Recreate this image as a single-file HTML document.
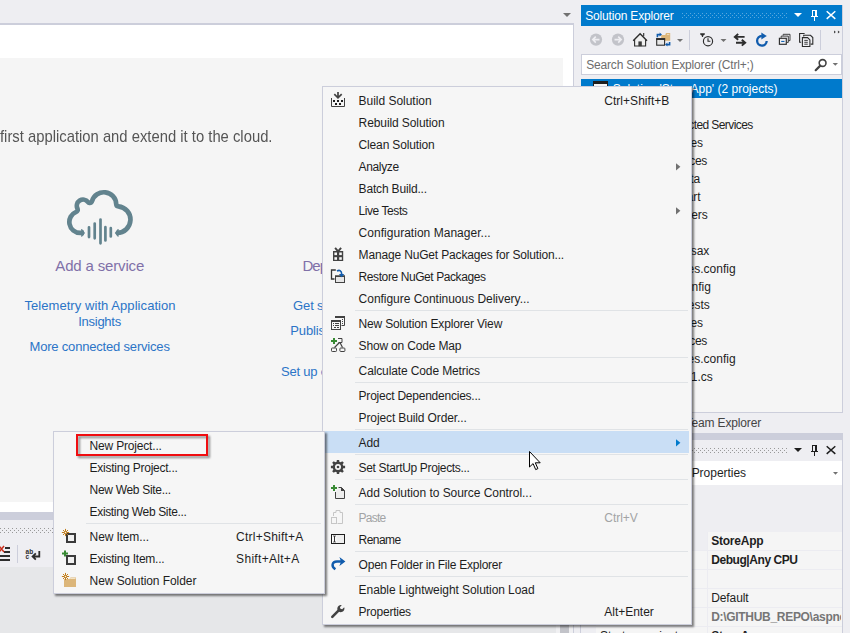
<!DOCTYPE html>
<html><head><meta charset="utf-8"><title>Solution Explorer - Add New Project</title>
<style>
html,body{margin:0;padding:0}
body{width:850px;height:633px;overflow:hidden;background:#eeeef2;position:relative;font-family:"Liberation Sans",sans-serif;}
.a{position:absolute}
.t{position:absolute;white-space:pre;}
.ic{position:absolute;overflow:visible}
#menu{position:absolute;left:322px;top:86px;width:368px;height:537px;background:#f6f6f6;border:1px solid #cccedb;box-shadow:2px 2px 2px rgba(0,0,0,.5);}
#sub{position:absolute;left:53px;top:431px;width:270px;height:161px;background:#f6f6f6;border:1px solid #cccedb;box-shadow:2px 2px 2px rgba(0,0,0,.5);}
.sep{position:absolute;height:1px;background:#e0e3e6}
</style></head><body>
<div id="page" class="a" style="left:0;top:0;width:850px;height:633px;overflow:hidden">
<!-- document well -->
<div class="a" style="left:0;top:23px;width:574px;height:2px;background:#cccedb"></div>
<div class="a" style="left:0;top:25px;width:573px;height:487px;background:#fff"></div>
<div class="a" style="left:573px;top:23px;width:1px;height:497px;background:#cccedb"></div>
<div class="a" style="left:0;top:58px;width:563px;height:444px;background:#f5f5f5"></div>
<div class="a" style="left:0;top:512px;width:574px;height:8px;background:#cccedb"></div>
<div class="a" style="left:0;top:567px;width:581px;height:66px;background:#e6e7e9"></div>
<div class="a" style="left:556px;top:567px;width:17px;height:66px;background:#f0f0f2"></div>
<div class="a" style="left:560px;top:567px;width:9px;height:66px;background:#c2c3c9"></div>
<div class="a" style="left:573px;top:567px;width:1px;height:66px;background:#cccedb"></div>
<div class="a" style="left:574px;top:567px;width:6px;height:66px;background:#eeeef2"></div>
<div class="a" style="left:580px;top:440px;width:1px;height:193px;background:#cccedb"></div>
<!-- solution explorer -->
<div class="a" style="left:581px;top:5px;width:261px;height:407px;background:#f5f5f5;border-right:1px solid #cccedb;border-bottom:1px solid #cccedb"></div>
<div class="a" style="left:581px;top:5px;width:261px;height:21px;background:#007acc"></div>
<div class="a" style="left:581px;top:26px;width:261px;height:53px;background:#eeeef2"></div>
<div class="a" style="left:581px;top:54px;width:259px;height:19px;background:#fff;border:1px solid #cccedb"></div>
<div class="a" style="left:581px;top:79px;width:261px;height:19px;background:#007acc"></div>
<div class="a" style="left:689px;top:30px;width:1px;height:20px;background:#cccedb"></div>
<div class="a" style="left:820px;top:30px;width:1px;height:20px;background:#cccedb"></div>
<!-- properties -->
<div class="a" style="left:581px;top:433px;width:262px;height:7px;background:#cccedb"></div>
<div class="a" style="left:581px;top:440px;width:261px;height:193px;background:#eeeef2;border-right:1px solid #cccedb"></div>
<div class="a" style="left:581px;top:461px;width:261px;height:24px;background:#fff"></div>
<div class="a" style="left:596px;top:532px;width:246px;height:101px;background:#f5f5f5"></div>
<div class="a" style="left:596px;top:532px;width:112px;height:18px;background:#eeeef2"></div>
<div class="a" style="left:596px;top:550px;width:246px;height:1px;background:#ececf1"></div>
<div class="a" style="left:596px;top:569px;width:246px;height:1px;background:#ececf1"></div>
<div class="a" style="left:596px;top:588px;width:246px;height:1px;background:#ececf1"></div>
<div class="a" style="left:596px;top:607px;width:246px;height:1px;background:#ececf1"></div>
<div class="a" style="left:596px;top:626px;width:246px;height:1px;background:#ececf1"></div>
<div class="a" style="left:707px;top:532px;width:1px;height:101px;background:#ececf1"></div>
<svg class="ic" style="left:60px;top:185px" width="80" height="65" viewBox="60 185 80 65" ><clipPath id="cloudclip"><path d="M84 235.30H80.3A13.30 13.30 0 0 1 75.36 209.65A8.60 8.60 0 0 1 89.79 200.49A14.70 14.70 0 0 1 118.59 203.97A15.70 15.70 0 0 1 117.10 235.30H116.5z"/></clipPath><path d="M84 235.30H80.3A13.30 13.30 0 0 1 75.36 209.65A8.60 8.60 0 0 1 89.79 200.49A14.70 14.70 0 0 1 118.59 203.97A15.70 15.70 0 0 1 117.10 235.30H116.5" fill="none" stroke="#62838e" stroke-width="9.4" stroke-linejoin="round" clip-path="url(#cloudclip)"/><path d="M81.2 229l0.8 0l3 3.9l-3 3.9l-0.8 0zM118.6 229l-0.8 0l-3 3.9l3 3.9l0.8 0z" fill="#62838e"/><g stroke="#62838e" stroke-width="2.7" stroke-linecap="round" fill="none"><path d="M89 227.3v9.8M94.7 223.5v14.8M100.5 219.5v23.8M105.4 227.2v13.2M110.8 228.2v8.2"/></g></svg>
<svg class="ic" style="left:682px;top:13px" width="106" height="5" viewBox="682 13 106 5" ><g fill="#59a8de" shape-rendering="crispEdges"><rect x="682" y="13" width="1" height="1"/><rect x="682" y="17" width="1" height="1"/><rect x="684" y="15" width="1" height="1"/><rect x="686" y="13" width="1" height="1"/><rect x="686" y="17" width="1" height="1"/><rect x="688" y="15" width="1" height="1"/><rect x="690" y="13" width="1" height="1"/><rect x="690" y="17" width="1" height="1"/><rect x="692" y="15" width="1" height="1"/><rect x="694" y="13" width="1" height="1"/><rect x="694" y="17" width="1" height="1"/><rect x="696" y="15" width="1" height="1"/><rect x="698" y="13" width="1" height="1"/><rect x="698" y="17" width="1" height="1"/><rect x="700" y="15" width="1" height="1"/><rect x="702" y="13" width="1" height="1"/><rect x="702" y="17" width="1" height="1"/><rect x="704" y="15" width="1" height="1"/><rect x="706" y="13" width="1" height="1"/><rect x="706" y="17" width="1" height="1"/><rect x="708" y="15" width="1" height="1"/><rect x="710" y="13" width="1" height="1"/><rect x="710" y="17" width="1" height="1"/><rect x="712" y="15" width="1" height="1"/><rect x="714" y="13" width="1" height="1"/><rect x="714" y="17" width="1" height="1"/><rect x="716" y="15" width="1" height="1"/><rect x="718" y="13" width="1" height="1"/><rect x="718" y="17" width="1" height="1"/><rect x="720" y="15" width="1" height="1"/><rect x="722" y="13" width="1" height="1"/><rect x="722" y="17" width="1" height="1"/><rect x="724" y="15" width="1" height="1"/><rect x="726" y="13" width="1" height="1"/><rect x="726" y="17" width="1" height="1"/><rect x="728" y="15" width="1" height="1"/><rect x="730" y="13" width="1" height="1"/><rect x="730" y="17" width="1" height="1"/><rect x="732" y="15" width="1" height="1"/><rect x="734" y="13" width="1" height="1"/><rect x="734" y="17" width="1" height="1"/><rect x="736" y="15" width="1" height="1"/><rect x="738" y="13" width="1" height="1"/><rect x="738" y="17" width="1" height="1"/><rect x="740" y="15" width="1" height="1"/><rect x="742" y="13" width="1" height="1"/><rect x="742" y="17" width="1" height="1"/><rect x="744" y="15" width="1" height="1"/><rect x="746" y="13" width="1" height="1"/><rect x="746" y="17" width="1" height="1"/><rect x="748" y="15" width="1" height="1"/><rect x="750" y="13" width="1" height="1"/><rect x="750" y="17" width="1" height="1"/><rect x="752" y="15" width="1" height="1"/><rect x="754" y="13" width="1" height="1"/><rect x="754" y="17" width="1" height="1"/><rect x="756" y="15" width="1" height="1"/><rect x="758" y="13" width="1" height="1"/><rect x="758" y="17" width="1" height="1"/><rect x="760" y="15" width="1" height="1"/><rect x="762" y="13" width="1" height="1"/><rect x="762" y="17" width="1" height="1"/><rect x="764" y="15" width="1" height="1"/><rect x="766" y="13" width="1" height="1"/><rect x="766" y="17" width="1" height="1"/><rect x="768" y="15" width="1" height="1"/><rect x="770" y="13" width="1" height="1"/><rect x="770" y="17" width="1" height="1"/><rect x="772" y="15" width="1" height="1"/><rect x="774" y="13" width="1" height="1"/><rect x="774" y="17" width="1" height="1"/><rect x="776" y="15" width="1" height="1"/><rect x="778" y="13" width="1" height="1"/><rect x="778" y="17" width="1" height="1"/><rect x="780" y="15" width="1" height="1"/><rect x="782" y="13" width="1" height="1"/><rect x="782" y="17" width="1" height="1"/><rect x="784" y="15" width="1" height="1"/><rect x="786" y="13" width="1" height="1"/><rect x="786" y="17" width="1" height="1"/></g></svg>
<svg class="ic" style="left:682px;top:448px" width="106" height="5" viewBox="682 448 106 5" ><g fill="#999999" shape-rendering="crispEdges"><rect x="682" y="448" width="1" height="1"/><rect x="682" y="452" width="1" height="1"/><rect x="684" y="450" width="1" height="1"/><rect x="686" y="448" width="1" height="1"/><rect x="686" y="452" width="1" height="1"/><rect x="688" y="450" width="1" height="1"/><rect x="690" y="448" width="1" height="1"/><rect x="690" y="452" width="1" height="1"/><rect x="692" y="450" width="1" height="1"/><rect x="694" y="448" width="1" height="1"/><rect x="694" y="452" width="1" height="1"/><rect x="696" y="450" width="1" height="1"/><rect x="698" y="448" width="1" height="1"/><rect x="698" y="452" width="1" height="1"/><rect x="700" y="450" width="1" height="1"/><rect x="702" y="448" width="1" height="1"/><rect x="702" y="452" width="1" height="1"/><rect x="704" y="450" width="1" height="1"/><rect x="706" y="448" width="1" height="1"/><rect x="706" y="452" width="1" height="1"/><rect x="708" y="450" width="1" height="1"/><rect x="710" y="448" width="1" height="1"/><rect x="710" y="452" width="1" height="1"/><rect x="712" y="450" width="1" height="1"/><rect x="714" y="448" width="1" height="1"/><rect x="714" y="452" width="1" height="1"/><rect x="716" y="450" width="1" height="1"/><rect x="718" y="448" width="1" height="1"/><rect x="718" y="452" width="1" height="1"/><rect x="720" y="450" width="1" height="1"/><rect x="722" y="448" width="1" height="1"/><rect x="722" y="452" width="1" height="1"/><rect x="724" y="450" width="1" height="1"/><rect x="726" y="448" width="1" height="1"/><rect x="726" y="452" width="1" height="1"/><rect x="728" y="450" width="1" height="1"/><rect x="730" y="448" width="1" height="1"/><rect x="730" y="452" width="1" height="1"/><rect x="732" y="450" width="1" height="1"/><rect x="734" y="448" width="1" height="1"/><rect x="734" y="452" width="1" height="1"/><rect x="736" y="450" width="1" height="1"/><rect x="738" y="448" width="1" height="1"/><rect x="738" y="452" width="1" height="1"/><rect x="740" y="450" width="1" height="1"/><rect x="742" y="448" width="1" height="1"/><rect x="742" y="452" width="1" height="1"/><rect x="744" y="450" width="1" height="1"/><rect x="746" y="448" width="1" height="1"/><rect x="746" y="452" width="1" height="1"/><rect x="748" y="450" width="1" height="1"/><rect x="750" y="448" width="1" height="1"/><rect x="750" y="452" width="1" height="1"/><rect x="752" y="450" width="1" height="1"/><rect x="754" y="448" width="1" height="1"/><rect x="754" y="452" width="1" height="1"/><rect x="756" y="450" width="1" height="1"/><rect x="758" y="448" width="1" height="1"/><rect x="758" y="452" width="1" height="1"/><rect x="760" y="450" width="1" height="1"/><rect x="762" y="448" width="1" height="1"/><rect x="762" y="452" width="1" height="1"/><rect x="764" y="450" width="1" height="1"/><rect x="766" y="448" width="1" height="1"/><rect x="766" y="452" width="1" height="1"/><rect x="768" y="450" width="1" height="1"/><rect x="770" y="448" width="1" height="1"/><rect x="770" y="452" width="1" height="1"/><rect x="772" y="450" width="1" height="1"/><rect x="774" y="448" width="1" height="1"/><rect x="774" y="452" width="1" height="1"/><rect x="776" y="450" width="1" height="1"/><rect x="778" y="448" width="1" height="1"/><rect x="778" y="452" width="1" height="1"/><rect x="780" y="450" width="1" height="1"/><rect x="782" y="448" width="1" height="1"/><rect x="782" y="452" width="1" height="1"/><rect x="784" y="450" width="1" height="1"/><rect x="786" y="448" width="1" height="1"/><rect x="786" y="452" width="1" height="1"/></g></svg>
<svg class="ic" style="left:0px;top:528px" width="53" height="5" viewBox="0 528 53 5" ><g fill="#999999" shape-rendering="crispEdges"><rect x="0" y="528" width="1" height="1"/><rect x="0" y="532" width="1" height="1"/><rect x="2" y="530" width="1" height="1"/><rect x="4" y="528" width="1" height="1"/><rect x="4" y="532" width="1" height="1"/><rect x="6" y="530" width="1" height="1"/><rect x="8" y="528" width="1" height="1"/><rect x="8" y="532" width="1" height="1"/><rect x="10" y="530" width="1" height="1"/><rect x="12" y="528" width="1" height="1"/><rect x="12" y="532" width="1" height="1"/><rect x="14" y="530" width="1" height="1"/><rect x="16" y="528" width="1" height="1"/><rect x="16" y="532" width="1" height="1"/><rect x="18" y="530" width="1" height="1"/><rect x="20" y="528" width="1" height="1"/><rect x="20" y="532" width="1" height="1"/><rect x="22" y="530" width="1" height="1"/><rect x="24" y="528" width="1" height="1"/><rect x="24" y="532" width="1" height="1"/><rect x="26" y="530" width="1" height="1"/><rect x="28" y="528" width="1" height="1"/><rect x="28" y="532" width="1" height="1"/><rect x="30" y="530" width="1" height="1"/><rect x="32" y="528" width="1" height="1"/><rect x="32" y="532" width="1" height="1"/><rect x="34" y="530" width="1" height="1"/><rect x="36" y="528" width="1" height="1"/><rect x="36" y="532" width="1" height="1"/><rect x="38" y="530" width="1" height="1"/><rect x="40" y="528" width="1" height="1"/><rect x="40" y="532" width="1" height="1"/><rect x="42" y="530" width="1" height="1"/><rect x="44" y="528" width="1" height="1"/><rect x="44" y="532" width="1" height="1"/><rect x="46" y="530" width="1" height="1"/><rect x="48" y="528" width="1" height="1"/><rect x="48" y="532" width="1" height="1"/><rect x="50" y="530" width="1" height="1"/><rect x="52" y="528" width="1" height="1"/><rect x="52" y="532" width="1" height="1"/></g></svg>
<svg class="ic" style="left:790px;top:8px" width="50" height="18" viewBox="790 8 50 18" ><path d="M794 13h8l-4 4z" fill="#ffffff"/><g fill="#ffffff" shape-rendering="crispEdges"><rect x="812" y="10" width="5" height="1"/><rect x="812" y="10" width="1" height="6"/><rect x="815" y="10" width="2" height="6"/><rect x="811" y="16" width="7" height="1"/><rect x="814" y="17" width="1" height="4"/></g><path d="M826.7 11.3l8.6 7.6M835.3 11.3l-8.6 7.6" stroke="#ffffff" stroke-width="1.5" fill="none"/></svg>
<svg class="ic" style="left:790px;top:443px" width="50" height="18" viewBox="790 443 50 18" ><path d="M794 448h8l-4 4z" fill="#1e1e1e"/><g fill="#1e1e1e" shape-rendering="crispEdges"><rect x="812" y="445" width="5" height="1"/><rect x="812" y="445" width="1" height="6"/><rect x="815" y="445" width="2" height="6"/><rect x="811" y="451" width="7" height="1"/><rect x="814" y="452" width="1" height="4"/></g><path d="M826.7 446.3l8.6 7.6M835.3 446.3l-8.6 7.6" stroke="#1e1e1e" stroke-width="1.5" fill="none"/></svg>
<svg class="ic" style="left:586px;top:30px" width="100" height="20" viewBox="586 30 100 20" ><circle cx="596" cy="39.6" r="6.1" fill="#c2c3c9"/><path d="M599.5 39.6h-6.5M595.8 36.6l-3 3l3 3" stroke="#eeeef2" stroke-width="1.6" fill="none"/><circle cx="618" cy="39.6" r="6.1" fill="#c2c3c9"/><path d="M614.5 39.6h6.5M618.2 36.6l3 3l-3 3" stroke="#eeeef2" stroke-width="1.6" fill="none"/><path d="M634.6 40v6h11V40l-5.5-5.6z" fill="#f0f0f0"/><path d="M634.6 39.6v6.4h11v-6.4" fill="none" stroke="#2d2d2d" stroke-width="1.1"/><path d="M633.2 40.7l6.9-7l6.9 7" fill="none" stroke="#2d2d2d" stroke-width="1.4"/><path d="M643.7 36.2v-3.2" stroke="#2d2d2d" stroke-width="1.1"/><rect x="638.4" y="41.4" width="3.4" height="4.8" fill="#3a3a3a"/><path d="M661.2 40.7V35h4l0.8-2.1h4.2v7.8z" fill="#dcb67a"/><path d="M667 34.5h2.4" stroke="#f3e3c4" stroke-width="0.8"/><rect x="656.7" y="38.7" width="7.9" height="6.5" fill="#e8e8e8" stroke="#2d2d2d" stroke-width="1.1"/><rect x="656.2" y="38.2" width="8.9" height="1.8" fill="#2d2d2d"/><path d="M657.4 37.2v-2.6h2.6" fill="none" stroke="#115cad" stroke-width="1.6"/><path d="M659.6 32.6l2.4 2l-2.4 2z" fill="#115cad"/><path d="M669.6 42v2.6h-2.6" fill="none" stroke="#115cad" stroke-width="1.6"/><path d="M667.4 42.6l-2.4 2l2.4 2z" fill="#115cad"/><path d="M677 39h6l-3 3z" fill="#717171"/></svg>
<svg class="ic" style="left:699px;top:30px" width="143" height="20" viewBox="699 30 143 20" ><path d="M700.2 33.3h4.6v1.1l-1.7 1.3v1.4h-1.2v-1.4l-1.7-1.3z" fill="#2d2d2d"/><circle cx="708" cy="41.2" r="4.6" fill="#eeeef2" stroke="#2d2d2d" stroke-width="1.15"/><path d="M708 38.2v3.1h2.4" fill="none" stroke="#2d2d2d" stroke-width="1.1"/><path d="M720.5 39h6l-3 3z" fill="#717171"/><path d="M744.6 36.9h-9M738.2 34l-3.4 2.9l3.4 2.9" fill="none" stroke="#2d2d2d" stroke-width="1.9"/><path d="M736 42.7h9M741.8 39.8l3.4 2.9l-3.4 2.9" fill="none" stroke="#2d2d2d" stroke-width="1.9"/><path d="M766.7 41A4.8 4.8 0 1 1 761.9 36" fill="none" stroke="#115cad" stroke-width="2.3"/><path d="M761.4 32.6l5.4 3.4l-5.4 3.4z" fill="#115cad"/><path d="M783.2 35.6v-1.3h6.8v6.3h-1.5" fill="none" stroke="#2d2d2d" stroke-width="0.9"/><path d="M781.2 37.7v-1.6h7.1v6.3h-1.7" fill="none" stroke="#2d2d2d" stroke-width="0.9"/><rect x="779.4" y="38.3" width="6.9" height="6" fill="#eeeef2" stroke="#2d2d2d" stroke-width="1.15"/><rect x="781.2" y="40.9" width="3.3" height="1.1" fill="#1565b4"/><path d="M804.6 33.5h-5v8.8h1.6" fill="none" stroke="#2d2d2d" stroke-width="1.1"/><path d="M803.7 36.6v-1.3h6.8l2.3 2.3v6.5h-2.2" fill="none" stroke="#2d2d2d" stroke-width="1.1"/><path d="M802.4 37.6h5.2l2.3 2.3v6.6h-7.5z" fill="#eeeef2" stroke="#2d2d2d" stroke-width="1.1"/><path d="M804.3 40.4h3.5M804.3 42.3h3.5M804.3 44.2h3.5" stroke="#2d2d2d" stroke-width="0.9"/><path d="M834 30.4l1.9 1.6l-1.9 1.6zM837.9 30.4l1.9 1.6l-1.9 1.6z" fill="#444"/></svg>
<svg class="ic" style="left:812px;top:57px" width="28" height="16" viewBox="812 57 28 16" ><circle cx="822.6" cy="63" r="3.4" fill="none" stroke="#424242" stroke-width="1.6"/><path d="M820.3 65.6l-4.6 4.6" stroke="#424242" stroke-width="2.2" stroke-linecap="round"/><path d="M832.6 63h5.4l-2.7 2.8z" fill="#717171"/></svg>
<svg class="ic" style="left:562px;top:12px" width="10" height="6" viewBox="562 12 10 6" ><path d="M563 13h8l-4 4z" fill="#717171"/></svg>
<svg class="ic" style="left:832px;top:471px" width="7" height="4" viewBox="832 471 7 4" ><path d="M833 472h5l-2.5 2.8z" fill="#717171"/></svg>
<svg class="ic" style="left:592px;top:80px" width="18" height="8" viewBox="592 80 18 8" ><rect x="593.5" y="81.5" width="14" height="8" fill="#f5f5f5" stroke="#1e1e1e" stroke-width="1"/><rect x="593" y="81" width="15" height="3" fill="#1e1e1e"/></svg>
<svg class="ic" style="left:0px;top:544px" width="45" height="20" viewBox="0 544 45 20" ><g fill="#2d2d2d" shape-rendering="crispEdges"><rect x="5" y="547" width="5" height="2"/><rect x="4" y="551" width="6" height="2"/><rect x="0" y="555" width="10" height="2"/><rect x="0" y="559" width="10" height="2"/></g><path d="M-1 546l5 6M4 546l-5 6" stroke="#c8301e" stroke-width="1.5"/><rect x="17" y="545" width="1" height="18" fill="#cccedb"/><path d="M39.3 551v5.5h-6M35.8 553.4l-3.2 3.1l3.2 3.1" fill="none" stroke="#2d2d2d" stroke-width="1.8"/><text x="25.6" y="553.6" font-family="Liberation Sans, sans-serif" font-size="6.5" font-weight="bold" fill="#2d2d2d">ab</text><text x="25.6" y="559.4" font-family="Liberation Sans, sans-serif" font-size="6.5" font-weight="bold" fill="#2d2d2d">c</text></svg>
<span class="t" style="top:126.00px;font-size:17px;line-height:21px;color:#555555;left:0.0px;transform:scaleX(0.8711);transform-origin:0 0;">first application and extend it to the cloud.</span>
<span class="t" style="top:256.00px;font-size:15px;line-height:19px;color:#8070a8;left:55.3px;letter-spacing:-0.158px;">Add a service</span>
<span class="t" style="top:297.00px;font-size:13px;line-height:17px;color:#2b74c7;left:24.4px;letter-spacing:0.065px;">Telemetry with Application</span>
<span class="t" style="top:313.00px;font-size:13px;line-height:17px;color:#2b74c7;left:78.2px;letter-spacing:-0.259px;">Insights</span>
<span class="t" style="top:338.00px;font-size:13px;line-height:17px;color:#2b74c7;left:29.5px;letter-spacing:-0.187px;">More connected services</span>
<span class="t" style="top:256.00px;font-size:15px;line-height:19px;color:#8070a8;left:302.4px;letter-spacing:-0.900px;">Deploy</span>
<span class="t" style="top:297.00px;font-size:13px;line-height:17px;color:#2b74c7;left:293.1px;letter-spacing:-0.150px;">Get started with Azure</span>
<span class="t" style="top:322.00px;font-size:13px;line-height:17px;color:#2b74c7;left:290.3px;letter-spacing:-0.150px;">Publish your app</span>
<span class="t" style="top:363.00px;font-size:13px;line-height:17px;color:#2b74c7;left:281.0px;letter-spacing:-0.220px;">Set up continuous delivery</span>
<span class="t" style="top:8.00px;font-size:12px;line-height:16px;color:#ffffff;left:585.2px;letter-spacing:-0.174px;">Solution Explorer</span>
<span class="t" style="top:57.00px;font-size:12px;line-height:16px;color:#6d6d6d;left:586.2px;letter-spacing:-0.174px;">Search Solution Explorer (Ctrl+;)</span>
<span class="t" style="top:81.00px;font-size:12px;line-height:16px;color:#ffffff;right:72.5px;">Solution 'StoreApp' (2 projects)</span>
<span class="t" style="top:99.00px;font-size:12px;line-height:16px;color:#1e1e1e;right:160.0px;">StoreApp</span>
<span class="t" style="top:117.00px;font-size:12px;line-height:16px;color:#1e1e1e;right:97.3px;letter-spacing:-0.582px;">Connected Services</span>
<span class="t" style="top:135.00px;font-size:12px;line-height:16px;color:#1e1e1e;right:147.3px;letter-spacing:-0.245px;">Properties</span>
<span class="t" style="top:153.00px;font-size:12px;line-height:16px;color:#1e1e1e;right:143.2px;letter-spacing:-0.397px;">References</span>
<span class="t" style="top:171.00px;font-size:12px;line-height:16px;color:#1e1e1e;right:149.8px;">App_Data</span>
<span class="t" style="top:189.00px;font-size:12px;line-height:16px;color:#1e1e1e;right:149.3px;">App_Start</span>
<span class="t" style="top:207.00px;font-size:12px;line-height:16px;color:#1e1e1e;right:142.2px;">Controllers</span>
<span class="t" style="top:225.00px;font-size:12px;line-height:16px;color:#1e1e1e;right:162.0px;">Models</span>
<span class="t" style="top:243.00px;font-size:12px;line-height:16px;color:#1e1e1e;right:140.7px;">Global.asax</span>
<span class="t" style="top:261.00px;font-size:12px;line-height:16px;color:#1e1e1e;right:114.4px;">packages.config</span>
<span class="t" style="top:279.00px;font-size:12px;line-height:16px;color:#1e1e1e;right:139.2px;">Web.config</span>
<span class="t" style="top:297.00px;font-size:12px;line-height:16px;color:#1e1e1e;right:140.2px;">StoreApp.Tests</span>
<span class="t" style="top:315.00px;font-size:12px;line-height:16px;color:#1e1e1e;right:147.3px;letter-spacing:-0.245px;">Properties</span>
<span class="t" style="top:333.00px;font-size:12px;line-height:16px;color:#1e1e1e;right:143.2px;letter-spacing:-0.397px;">References</span>
<span class="t" style="top:351.00px;font-size:12px;line-height:16px;color:#1e1e1e;right:114.4px;">packages.config</span>
<span class="t" style="top:369.00px;font-size:12px;line-height:16px;color:#1e1e1e;right:137.2px;">UnitTest1.cs</span>
<span class="t" style="top:415.00px;font-size:12px;line-height:16px;color:#444444;right:88.9px;letter-spacing:-0.140px;">Team Explorer</span>
<span class="t" style="top:465.00px;font-size:12px;line-height:16px;color:#1e1e1e;right:103.9px;letter-spacing:-0.022px;">Solution Properties</span>
<span class="t" style="top:533.00px;font-size:12px;line-height:16px;color:#1e1e1e;font-weight:bold;left:711.2px;letter-spacing:-0.229px;">StoreApp</span>
<span class="t" style="top:552.00px;font-size:12px;line-height:16px;color:#1e1e1e;font-weight:bold;left:711.2px;letter-spacing:-0.436px;">Debug|Any CPU</span>
<span class="t" style="top:590.00px;font-size:12px;line-height:16px;color:#1e1e1e;left:711.2px;letter-spacing:-0.089px;">Default</span>
<span class="t" style="top:609.00px;font-size:12px;line-height:16px;color:#767676;font-weight:bold;left:711.2px;letter-spacing:-0.304px;width:129.8px;overflow:hidden;">D:\GITHUB_REPO\aspnet</span>
<span class="t" style="top:628.00px;font-size:12px;line-height:16px;color:#1e1e1e;font-weight:bold;left:711.2px;letter-spacing:-0.229px;">StoreApp</span>
<span class="t" style="top:628.00px;font-size:12px;line-height:16px;color:#1e1e1e;left:600.0px;">Startup project</span>
</div>
<div id="menu">
</div>
<div class="a" id="menutext" style="left:0;top:0;width:850px;height:633px">
<div class="a" style="left:323px;top:431px;width:366px;height:22px;background:#c9def5"></div>
<div class="sep" style="left:355px;top:310px;width:333px"></div>
<div class="sep" style="left:355px;top:357px;width:333px"></div>
<div class="sep" style="left:355px;top:382px;width:333px"></div>
<div class="sep" style="left:355px;top:429px;width:333px"></div>
<div class="sep" style="left:355px;top:454px;width:333px"></div>
<div class="sep" style="left:355px;top:479px;width:333px"></div>
<div class="sep" style="left:355px;top:504px;width:333px"></div>
<div class="sep" style="left:355px;top:551px;width:333px"></div>
<div class="sep" style="left:355px;top:576px;width:333px"></div>
<svg class="ic" style="left:676px;top:163px" width="5" height="8" viewBox="0 0 5 8"><path d="M0 0.2L4.4 3.8L0 7.4z" fill="#717171"/></svg>
<svg class="ic" style="left:676px;top:207px" width="5" height="8" viewBox="0 0 5 8"><path d="M0 0.2L4.4 3.8L0 7.4z" fill="#717171"/></svg>
<svg class="ic" style="left:676px;top:439px" width="5" height="8" viewBox="0 0 5 8"><path d="M0 0.2L4.4 3.8L0 7.4z" fill="#007acc"/></svg>

<svg class="ic" style="left:330px;top:90px" width="16" height="18" viewBox="330 90 16 18" ><path d="M331.5 98v8.5h13V98" fill="none" stroke="#424242" stroke-width="1"/><path d="M338 92v5M334.3 94.2L338 97.8l3.7-3.6" fill="none" stroke="#424242" stroke-width="1.7"/><g fill="#1e1e1e"><rect x="333" y="100" width="2" height="2"/><rect x="337" y="100" width="2" height="2"/><rect x="341" y="100" width="2" height="2"/><rect x="335" y="103" width="2" height="2"/><rect x="339" y="103" width="2" height="2"/></g></svg>
<svg class="ic" style="left:330px;top:246px" width="16" height="16" viewBox="330 246 16 16" ><rect x="333" y="251" width="10.2" height="10" fill="#424242"/><g fill="#f6f6f6"><rect x="334.4" y="252.5" width="2.6" height="2.6"/><rect x="339.2" y="252.5" width="2.6" height="2.6"/><rect x="334.4" y="257.2" width="2.6" height="2.6"/><rect x="339.2" y="257.2" width="2.6" height="2.6"/></g><path d="M338.1 251.4l-3-3.6M338.1 251.4l3-3.6" fill="none" stroke="#424242" stroke-width="1.9"/></svg>
<svg class="ic" style="left:330px;top:268px" width="16" height="16" viewBox="330 268 16 16" ><path d="M335.8 270h-4.3v9h3" fill="none" stroke="#333" stroke-width="1.3"/><rect x="335.5" y="276" width="9" height="6.5" fill="#e6e6e6" stroke="#424242" stroke-width="1"/><rect x="335" y="275.5" width="10" height="1.5" fill="#424242"/><path d="M337 271.2c2.2-1.6 4.6-0.6 4.6 2.4v2.2" fill="none" stroke="#115cad" stroke-width="1.6"/><path d="M338.9 274l2.7 3.2l2.7-3.2z" fill="#115cad"/></svg>
<svg class="ic" style="left:330px;top:315px" width="16" height="16" viewBox="330 315 16 16" ><path d="M335.5 317v-0.5h9v9h-3" fill="none" stroke="#424242" stroke-width="1"/><rect x="335" y="316" width="10" height="2" fill="#424242"/><rect x="342" y="319" width="1" height="1" fill="#424242"/><rect x="342" y="321" width="1" height="1" fill="#424242"/><rect x="342" y="323" width="1" height="1" fill="#424242"/><rect x="331.5" y="320.5" width="9" height="9" fill="#f6f6f6" stroke="#424242" stroke-width="1"/><rect x="331" y="320" width="10" height="2" fill="#424242"/><g fill="#424242"><rect x="333" y="323" width="1" height="1"/><rect x="335" y="323" width="4" height="1"/><rect x="333" y="325" width="1" height="1"/><rect x="335" y="325" width="4" height="1"/><rect x="334" y="327" width="2" height="1"/><rect x="337" y="327" width="2" height="1"/></g></svg>
<svg class="ic" style="left:330px;top:337px" width="16" height="16" viewBox="330 337 16 16" ><path d="M334 338v6M331 341h6" stroke="#388a34" stroke-width="2" fill="none"/><path d="M338 338.5h4v4h-3.5" fill="none" stroke="#424242" stroke-width="1"/><path d="M339.5 342.5l-5 5M340 342.5l2.5 5" fill="none" stroke="#424242" stroke-width="1.2"/><rect x="331.5" y="348" width="5" height="3.5" rx="0.8" fill="#f6f6f6" stroke="#424242" stroke-width="1"/><rect x="339.9" y="348" width="5" height="3.5" rx="0.8" fill="#f6f6f6" stroke="#424242" stroke-width="1"/></svg>
<svg class="ic" style="left:330px;top:459px" width="16" height="16" viewBox="330 459 16 16" ><path d="M345.10 465.82L345.10 468.18L343.24 468.30L342.63 469.79L343.86 471.19L342.19 472.86L340.79 471.63L339.30 472.24L339.18 474.10L336.82 474.10L336.70 472.24L335.21 471.63L333.81 472.86L332.14 471.19L333.37 469.79L332.76 468.30L330.90 468.18L330.90 465.82L332.76 465.70L333.37 464.21L332.14 462.81L333.81 461.14L335.21 462.37L336.70 461.76L336.82 459.90L339.18 459.90L339.30 461.76L340.79 462.37L342.19 461.14L343.86 462.81L342.63 464.21L343.24 465.70z" fill="#424242"/><circle cx="338" cy="467" r="3" fill="#f6f6f6"/><circle cx="338" cy="467" r="1.3" fill="#424242"/></svg>
<svg class="ic" style="left:330px;top:484px" width="16" height="16" viewBox="330 484 16 16" ><path d="M335.5 492v6.5h9v-8l-3-3h-3" fill="#ededed" stroke="#424242" stroke-width="1"/><path d="M341 487v4h4z" fill="#424242"/><path d="M334 485v6M331 488h6" stroke="#388a34" stroke-width="2" fill="none"/></svg>
<svg class="ic" style="left:330px;top:509px" width="16" height="16" viewBox="330 509 16 16" ><path d="M333.5 516v-3.5h2.5v-2h4v2h2.5v11h-5" fill="none" stroke="#c6c6c6" stroke-width="1"/><rect x="331.5" y="517.5" width="5" height="6" fill="#f6f6f6" stroke="#c6c6c6" stroke-width="1"/></svg>
<svg class="ic" style="left:330px;top:533px" width="16" height="12" viewBox="330 533 16 12" ><rect x="331.5" y="534.5" width="13" height="9" fill="#efefef" stroke="#1e1e1e" stroke-width="1"/><rect x="332" y="535" width="4.5" height="8" fill="#fbfbfb"/><path d="M334.5 536.5v5M333.3 536h1l0.2 0.5l0.2-0.5h1M333.3 542h1l0.2-0.5l0.2 0.5h1" fill="none" stroke="#1e1e1e" stroke-width="0.9"/></svg>
<svg class="ic" style="left:330px;top:556px" width="16" height="15" viewBox="330 556 16 15" ><path d="M335.4 569.3c-4.4-2.8-3.6-7.8 1.6-7.8h4" fill="none" stroke="#115cad" stroke-width="2.4"/><path d="M339.4 556.9l6 4.6l-6 4.6l1.6-4.6z" fill="#115cad"/></svg>
<svg class="ic" style="left:330px;top:604px" width="16" height="16" viewBox="330 604 16 16" ><path d="M332.3 616.8l6.4-6.4" stroke="#424242" stroke-width="2.6" stroke-linecap="round" fill="none"/><path d="M344.2 607.2a3.6 3.6 0 1 1-2.4-2.1l-1.9 2.1l0.6 1.6l1.7 0.5z" fill="#424242"/></svg>
<span class="t" style="top:93.00px;font-size:12px;line-height:16px;color:#1e1e1e;left:358.6px;letter-spacing:-0.030px;">Build Solution</span>
<span class="t" style="top:115.00px;font-size:12px;line-height:16px;color:#1e1e1e;left:358.6px;letter-spacing:-0.094px;">Rebuild Solution</span>
<span class="t" style="top:137.00px;font-size:12px;line-height:16px;color:#1e1e1e;left:358.6px;letter-spacing:-0.159px;">Clean Solution</span>
<span class="t" style="top:159.00px;font-size:12px;line-height:16px;color:#1e1e1e;left:358.6px;letter-spacing:-0.367px;">Analyze</span>
<span class="t" style="top:181.00px;font-size:12px;line-height:16px;color:#1e1e1e;left:358.6px;letter-spacing:-0.171px;">Batch Build...</span>
<span class="t" style="top:203.00px;font-size:12px;line-height:16px;color:#1e1e1e;left:358.6px;letter-spacing:-0.438px;">Live Tests</span>
<span class="t" style="top:225.00px;font-size:12px;line-height:16px;color:#1e1e1e;left:358.6px;letter-spacing:0.025px;">Configuration Manager...</span>
<span class="t" style="top:247.00px;font-size:12px;line-height:16px;color:#1e1e1e;left:358.6px;letter-spacing:-0.163px;">Manage NuGet Packages for Solution...</span>
<span class="t" style="top:269.00px;font-size:12px;line-height:16px;color:#1e1e1e;left:358.6px;letter-spacing:-0.413px;">Restore NuGet Packages</span>
<span class="t" style="top:291.00px;font-size:12px;line-height:16px;color:#1e1e1e;left:358.6px;letter-spacing:-0.028px;">Configure Continuous Delivery...</span>
<span class="t" style="top:316.00px;font-size:12px;line-height:16px;color:#1e1e1e;left:358.6px;letter-spacing:-0.166px;">New Solution Explorer View</span>
<span class="t" style="top:338.00px;font-size:12px;line-height:16px;color:#1e1e1e;left:358.6px;letter-spacing:-0.174px;">Show on Code Map</span>
<span class="t" style="top:363.00px;font-size:12px;line-height:16px;color:#1e1e1e;left:358.6px;letter-spacing:-0.122px;">Calculate Code Metrics</span>
<span class="t" style="top:388.00px;font-size:12px;line-height:16px;color:#1e1e1e;left:358.6px;letter-spacing:-0.232px;">Project Dependencies...</span>
<span class="t" style="top:410.00px;font-size:12px;line-height:16px;color:#1e1e1e;left:358.6px;letter-spacing:-0.120px;">Project Build Order...</span>
<span class="t" style="top:435.00px;font-size:12px;line-height:16px;color:#1e1e1e;left:358.6px;letter-spacing:-0.180px;">Add</span>
<span class="t" style="top:460.00px;font-size:12px;line-height:16px;color:#1e1e1e;left:358.6px;letter-spacing:-0.342px;">Set StartUp Projects...</span>
<span class="t" style="top:485.00px;font-size:12px;line-height:16px;color:#1e1e1e;left:358.6px;letter-spacing:-0.043px;">Add Solution to Source Control...</span>
<span class="t" style="top:510.00px;font-size:12px;line-height:16px;color:#a2a4a5;left:358.6px;letter-spacing:-0.772px;">Paste</span>
<span class="t" style="top:532.00px;font-size:12px;line-height:16px;color:#1e1e1e;left:358.6px;letter-spacing:-0.572px;">Rename</span>
<span class="t" style="top:557.00px;font-size:12px;line-height:16px;color:#1e1e1e;left:358.6px;letter-spacing:-0.236px;">Open Folder in File Explorer</span>
<span class="t" style="top:582.00px;font-size:12px;line-height:16px;color:#1e1e1e;left:358.6px;letter-spacing:-0.069px;">Enable Lightweight Solution Load</span>
<span class="t" style="top:604.00px;font-size:12px;line-height:16px;color:#1e1e1e;left:358.6px;letter-spacing:-0.245px;">Properties</span>
<span class="t" style="top:93.00px;font-size:12px;line-height:16px;color:#1e1e1e;left:604.3px;letter-spacing:0.027px;">Ctrl+Shift+B</span>
<span class="t" style="top:510.00px;font-size:12px;line-height:16px;color:#a2a4a5;left:604.3px;letter-spacing:-0.037px;">Ctrl+V</span>
<span class="t" style="top:604.00px;font-size:12px;line-height:16px;color:#1e1e1e;left:604.3px;letter-spacing:-0.025px;">Alt+Enter</span>
</div>
<div id="sub"></div>
<div class="a" id="subtext" style="left:0;top:0;width:850px;height:633px">
<div class="sep" style="left:86px;top:523px;width:235px"></div>
<div class="a" style="left:76px;top:434px;width:128px;height:18px;border:2px solid #f00d10;filter:drop-shadow(2px 2px 1px rgba(0,0,0,.45))"></div>
<svg class="ic" style="left:60px;top:528px" width="18" height="16" viewBox="60 528 18 16" ><rect x="67" y="534" width="8" height="8" fill="#f0f0f0" stroke="#3b3b3b" stroke-width="2"/><path d="M65.5 528.9v7.2M61.9 532.5h7.2M63.0 530.0l5 5M68.0 530.0l-5 5" stroke="#c27d1a" stroke-width="1" fill="none"/><circle cx="65.5" cy="532.5" r="1.1" fill="#f6f6f6" stroke="#c27d1a" stroke-width="0.8"/></svg>
<svg class="ic" style="left:60px;top:550px" width="18" height="16" viewBox="60 550 18 16" ><rect x="67" y="556" width="8" height="8" fill="#f0f0f0" stroke="#3b3b3b" stroke-width="2"/><path d="M65 550.5v6M62 553.5h6" stroke="#388a34" stroke-width="2" fill="none"/></svg>
<svg class="ic" style="left:60px;top:572px" width="18" height="16" viewBox="60 572 18 16" ><path d="M64 587v-8h5.5l1-1.5h5.5v9.5z" fill="#dcb67a"/><path d="M70.2 578.5h5.3" stroke="#f3e3c4" stroke-width="1"/><path d="M65.5 572.9v7.2M61.9 576.5h7.2M63.0 574.0l5 5M68.0 574.0l-5 5" stroke="#c27d1a" stroke-width="1" fill="none"/><circle cx="65.5" cy="576.5" r="1.1" fill="#f6f6f6" stroke="#c27d1a" stroke-width="0.8"/></svg>
<span class="t" style="top:438.00px;font-size:12px;line-height:16px;color:#1e1e1e;left:89.6px;letter-spacing:-0.185px;">New Project...</span>
<span class="t" style="top:460.00px;font-size:12px;line-height:16px;color:#1e1e1e;left:89.6px;letter-spacing:-0.245px;">Existing Project...</span>
<span class="t" style="top:482.00px;font-size:12px;line-height:16px;color:#1e1e1e;left:89.6px;letter-spacing:-0.308px;">New Web Site...</span>
<span class="t" style="top:504.00px;font-size:12px;line-height:16px;color:#1e1e1e;left:89.6px;letter-spacing:-0.349px;">Existing Web Site...</span>
<span class="t" style="top:529.00px;font-size:12px;line-height:16px;color:#1e1e1e;left:89.6px;letter-spacing:-0.129px;">New Item...</span>
<span class="t" style="top:551.00px;font-size:12px;line-height:16px;color:#1e1e1e;left:89.6px;letter-spacing:-0.247px;">Existing Item...</span>
<span class="t" style="top:573.00px;font-size:12px;line-height:16px;color:#1e1e1e;left:89.6px;letter-spacing:-0.070px;">New Solution Folder</span>
<span class="t" style="top:529.00px;font-size:12px;line-height:16px;color:#1e1e1e;left:236.1px;letter-spacing:0.227px;">Ctrl+Shift+A</span>
<span class="t" style="top:551.00px;font-size:12px;line-height:16px;color:#1e1e1e;left:236.1px;letter-spacing:0.305px;">Shift+Alt+A</span>
</div>
<svg class="ic" style="left:529px;top:451px" width="13" height="20" viewBox="529 451 13 20" ><path d="M529.5 451.5v15.5l3.6-3.4l2.6 6l2.2-1l-2.6-5.8h4.9z" fill="#fff" stroke="#000" stroke-width="1" stroke-linejoin="miter"/></svg>
</body></html>
